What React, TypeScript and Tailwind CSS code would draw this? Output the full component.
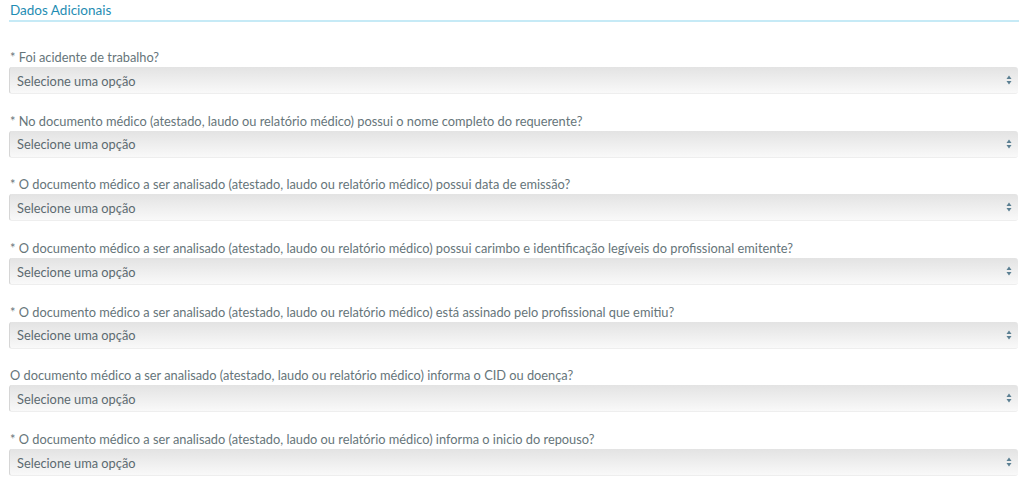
import React from "react";

const fields: { req: boolean; label: string }[] = [
  { req: true, label: "Foi acidente de trabalho?" },
  { req: true, label: "No documento médico (atestado, laudo ou relatório médico) possui o nome completo do requerente?" },
  { req: true, label: "O documento médico a ser analisado (atestado, laudo ou relatório médico) possui data de emissão?" },
  { req: true, label: "O documento médico a ser analisado (atestado, laudo ou relatório médico) possui carimbo e identificação legíveis do profissional emitente?" },
  { req: true, label: "O documento médico a ser analisado (atestado, laudo ou relatório médico) está assinado pelo profissional que emitiu?" },
  { req: false, label: "O documento médico a ser analisado (atestado, laudo ou relatório médico) informa o CID ou doença?" },
  { req: true, label: "O documento médico a ser analisado (atestado, laudo ou relatório médico) informa o inicio do repouso?" },
];

function Arrows() {
  return (
    <svg width="6" height="10" viewBox="0 0 6 10" className="shrink-0">
      <path d="M3 0.5 L5.5 4 L0.5 4 Z" fill="#5b7f92" />
      <path d="M3 9.5 L5.5 6 L0.5 6 Z" fill="#5b7f92" />
    </svg>
  );
}

export default function App() {
  return (
    <div
      className="w-[1024px] h-[482px] bg-white overflow-hidden text-[#66757a]"
      style={{ fontFamily: 'Lato, "Open Sans", sans-serif' }}
    >
      <div className="ml-[9px] mr-[5px] border-b-2 border-[#c6eaf6] pt-[1px] pb-[1px]">
        <h2 className="text-[13.5px] leading-[18px] text-[#1f8db3] pl-[1px]">Dados Adicionais</h2>
      </div>
      <div className="pt-[27px] pl-[9px] pr-[6px] flex flex-col gap-[18.7px]">
        {fields.map((f, i) => (
          <div key={i} className="flex flex-col">
            <div className="text-[12.8px] leading-[17px] pl-[1px] h-[18px] whitespace-nowrap">
              {f.req ? "* " : ""}
              {f.label}
            </div>
            <div className="h-[27px] flex items-center justify-between border-l border-[#d6d6d6] border-b border-b-[#eeeeee] rounded-[3px] bg-gradient-to-b from-[#e3e3e3] to-[#f9f9f9] pl-[7px] pr-[6px]">
              <span className="text-[12.8px] leading-[17px] pt-[2px] text-[#5c6a70]">Selecione uma opção</span>
              <Arrows />
            </div>
          </div>
        ))}
      </div>
    </div>
  );
}
